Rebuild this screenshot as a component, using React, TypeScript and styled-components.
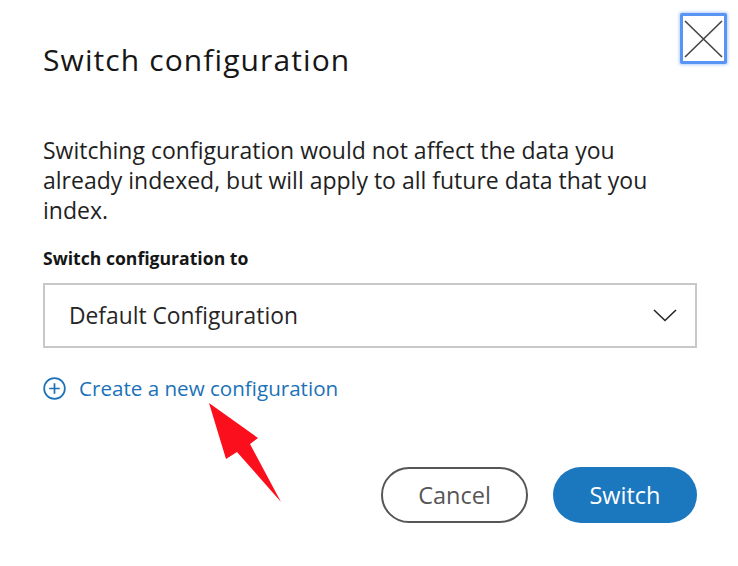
import React from "react";
import styled, { createGlobalStyle } from "styled-components";

const Global = createGlobalStyle`
  html, body { margin: 0; padding: 0; background: #ffffff; }
  body { font-family: "Open Sans", "Noto Sans", sans-serif; color: #161616; }
`;

const Dialog = styled.div`
  position: relative;
  width: 738px;
  height: 566px;
  box-sizing: border-box;
  padding: 0 41px 0 43px;
  display: flex;
  flex-direction: column;
  overflow: hidden;
`;

const Header = styled.div`
  display: flex;
  justify-content: space-between;
  align-items: flex-start;
  margin-right: -30px;
`;

const Title = styled.h2`
  margin: 40px 0 0;
  font-size: 30px;
  letter-spacing: 1.1px;
  font-weight: 400;
  line-height: 40px;
  color: #161616;
`;

const CloseButton = styled.button`
  margin-top: 13px;
  width: 47px;
  height: 51px;
  padding: 0;
  background: #fff;
  border: 3px solid #5894f4;
  border-radius: 2px;
  box-shadow: 0 0 3px 1px rgba(88, 148, 244, 0.45);
  display: flex;
  align-items: center;
  justify-content: center;
`;

const Body = styled.p`
  margin: 55px 0 0;
  font-size: 23px;
  line-height: 30px;
  color: #1f1f1f;
  max-width: 620px;
`;

const Label = styled.div`
  margin-top: 23px;
  font-size: 17.6px;
  font-weight: 700;
  line-height: 20px;
  color: #161616;
`;

const Select = styled.div`
  margin-top: 15px;
  height: 65px;
  box-sizing: border-box;
  border: 2px solid #c8c8c8;
  display: flex;
  align-items: center;
  justify-content: space-between;
  padding: 0 18px 0 24px;
  font-size: 22.8px;
  color: #262626;
`;

const LinkRow = styled.a`
  margin-top: 27px;
  display: flex;
  align-items: center;
  gap: 13px;
  font-size: 20.6px;
  color: #1b72b8;
  text-decoration: none;
  line-height: 26px;
`;

const Footer = styled.div`
  margin-top: 66px;
  display: flex;
  justify-content: flex-end;
  gap: 25px;
`;

const PillButton = styled.button<{ $primary?: boolean }>`
  height: 56px;
  width: ${(p) => (p.$primary ? "144px" : "147px")};
  border-radius: 28px;
  box-sizing: border-box;
  font-family: "Open Sans", "Noto Sans", sans-serif;
  font-size: 23.5px;
  border: ${(p) => (p.$primary ? "none" : "2px solid #565656")};
  background: ${(p) => (p.$primary ? "#1b77be" : "#ffffff")};
  color: ${(p) => (p.$primary ? "#ffffff" : "#565656")};
  font-weight: ${(p) => (p.$primary ? 500 : 400)};
`;

const ArrowOverlay = styled.svg`
  position: absolute;
  left: 0;
  top: 0;
  pointer-events: none;
`;

export default function App() {
  return (
    <>
      <Global />
      <Dialog>
        <Header>
          <Title>Switch configuration</Title>
          <CloseButton aria-label="Close">
            <svg width="40" height="40" viewBox="0 0 40 40">
              <path d="M1 2 L38 38 M38 2 L1 38" stroke="#444" strokeWidth="1.6" fill="none" />
            </svg>
          </CloseButton>
        </Header>
        <Body>
          Switching configuration would not affect the data you already indexed, but will apply to all future data that you index.
        </Body>
        <Label>Switch configuration to</Label>
        <Select>
          <span>Default Configuration</span>
          <svg width="24" height="14" viewBox="0 0 24 14">
            <path d="M1 1 L12 11.5 L23 1" stroke="#262626" strokeWidth="1.6" fill="none" />
          </svg>
        </Select>
        <LinkRow href="#">
          <svg width="23" height="23" viewBox="0 0 24 24">
            <circle cx="12" cy="12" r="10.8" stroke="#1b72b8" strokeWidth="1.8" fill="none" />
            <path d="M12 6.5 V17.5 M6.5 12 H17.5" stroke="#1b72b8" strokeWidth="1.8" />
          </svg>
          Create a new configuration
        </LinkRow>
        <Footer>
          <PillButton>Cancel</PillButton>
          <PillButton $primary>Switch</PillButton>
        </Footer>
        <ArrowOverlay width="738" height="566" viewBox="0 0 738 566">
          <polygon
            points="209,403 258,438 250,444 281,502 237,452 226,459"
            fill="#fb0f1c"
          />
        </ArrowOverlay>
      </Dialog>
    </>
  );
}
